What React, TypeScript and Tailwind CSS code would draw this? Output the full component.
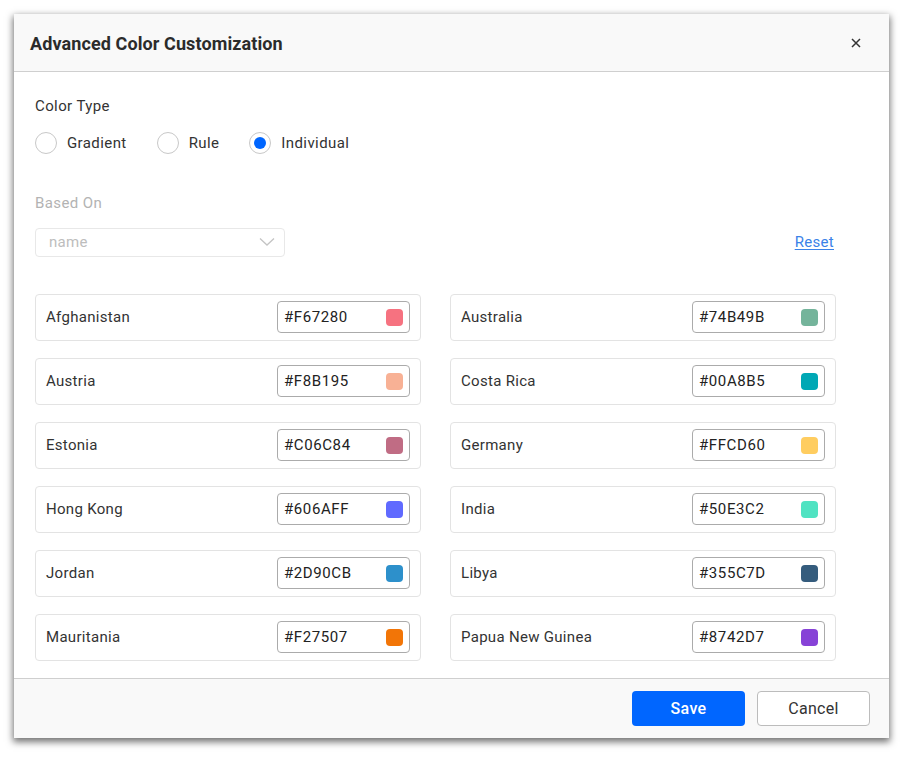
import React from "react";

const rows: [string, string, string, string][] = [
  ["Afghanistan", "#F67280", "Australia", "#74B49B"],
  ["Austria", "#F8B195", "Costa Rica", "#00A8B5"],
  ["Estonia", "#C06C84", "Germany", "#FFCD60"],
  ["Hong Kong", "#606AFF", "India", "#50E3C2"],
  ["Jordan", "#2D90CB", "Libya", "#355C7D"],
  ["Mauritania", "#F27507", "Papua New Guinea", "#8742D7"],
];

function Card({ name, color }: { name: string; color: string }) {
  return (
    <div className="flex h-[47px] items-center justify-between rounded-[4px] border border-[#e3e3e3] pl-[10px] pr-[10px]">
      <span className="text-[15px] tracking-[0.3px] text-[#333]">{name}</span>
      <div className="flex h-[32px] w-[133px] items-center justify-between rounded-[4px] border border-[#ababab] pl-[6px] pr-[6px]">
        <span className="text-[15px] tracking-[0.6px] text-[#222]">{color}</span>
        <span className="h-[17px] w-[17px] rounded-[4px]" style={{ backgroundColor: color }} />
      </div>
    </div>
  );
}

function Radio({ label, checked }: { label: string; checked?: boolean }) {
  return (
    <div className="flex items-center gap-[10px]">
      <span className="flex h-[22px] w-[22px] items-center justify-center rounded-full border border-[#c8c8c8] bg-white">
        {checked && <span className="h-[12px] w-[12px] rounded-full bg-[#0066ff]" />}
      </span>
      <span className="text-[15px] tracking-[0.4px] text-[#333]">{label}</span>
    </div>
  );
}

export default function App() {
  return (
    <div className="min-h-[758px] bg-white pl-[14px] pt-[14px]" style={{ fontFamily: "Roboto, 'Liberation Sans', sans-serif" }}>
      <div className="flex h-[724px] w-[875px] flex-col overflow-hidden bg-white shadow-[0_3px_7px_1px_rgba(0,0,0,0.55)]">
        <div className="flex h-[58px] shrink-0 items-center justify-between border-b border-[#cfcfcf] bg-[#f9f9f9] pl-[16px] pr-[28px] pt-[1px]">
          <span className="text-[18px] font-bold tracking-[0.1px] text-[#2b2b2b]">Advanced Color Customization</span>
          <svg width="10" height="10" viewBox="0 0 10 10" className="text-[#333]">
            <path d="M1 1L9 9M9 1L1 9" stroke="currentColor" strokeWidth="1.5" />
          </svg>
        </div>
        <div className="flex-1 pl-[21px] pr-[53px] pt-[24px]">
          <div className="text-[15px] leading-[20px] tracking-[0.4px] text-[#333]">Color Type</div>
          <div className="mt-[16px] flex items-center gap-[30px]">
            <Radio label="Gradient" />
            <Radio label="Rule" />
            <Radio label="Individual" checked />
          </div>
          <div className="mt-[38px] text-[15px] leading-[20px] tracking-[0.4px] text-[#b3b3b3]">Based On</div>
          <div className="mt-[15px] flex items-center justify-between">
            <div className="flex h-[29px] w-[250px] items-center justify-between rounded-[4px] border border-[#e8e8e8] pl-[13px] pr-[9px]">
              <span className="text-[15px] tracking-[0.3px] text-[#bdbdbd]">name</span>
              <svg width="16" height="10" viewBox="0 0 16 10">
                <path d="M1 1.5L8 8L15 1.5" stroke="#c4c4c4" strokeWidth="1.3" fill="none" />
              </svg>
            </div>
            <span className="mr-[2px] text-[15px] tracking-[0.3px] text-[#3a82e8] underline underline-offset-2">Reset</span>
          </div>
          <div className="mt-[37px] grid grid-cols-2 gap-x-[29px] gap-y-[17px]">
            {rows.map((r) => (
              <React.Fragment key={r[0]}>
                <Card name={r[0]} color={r[1]} />
                <Card name={r[2]} color={r[3]} />
              </React.Fragment>
            ))}
          </div>
        </div>
        <div className="flex h-[60px] shrink-0 items-center justify-end gap-[12px] border-t border-[#cfcfcf] bg-[#f9f9f9] pr-[19px]">
          <button className="h-[35px] w-[113px] rounded-[4px] bg-[#0066ff] text-[16px] font-medium tracking-[0.3px] text-white">Save</button>
          <button className="h-[35px] w-[113px] rounded-[4px] border border-[#bcbcbc] bg-white text-[16px] tracking-[0.3px] text-[#333]">Cancel</button>
        </div>
      </div>
    </div>
  );
}
